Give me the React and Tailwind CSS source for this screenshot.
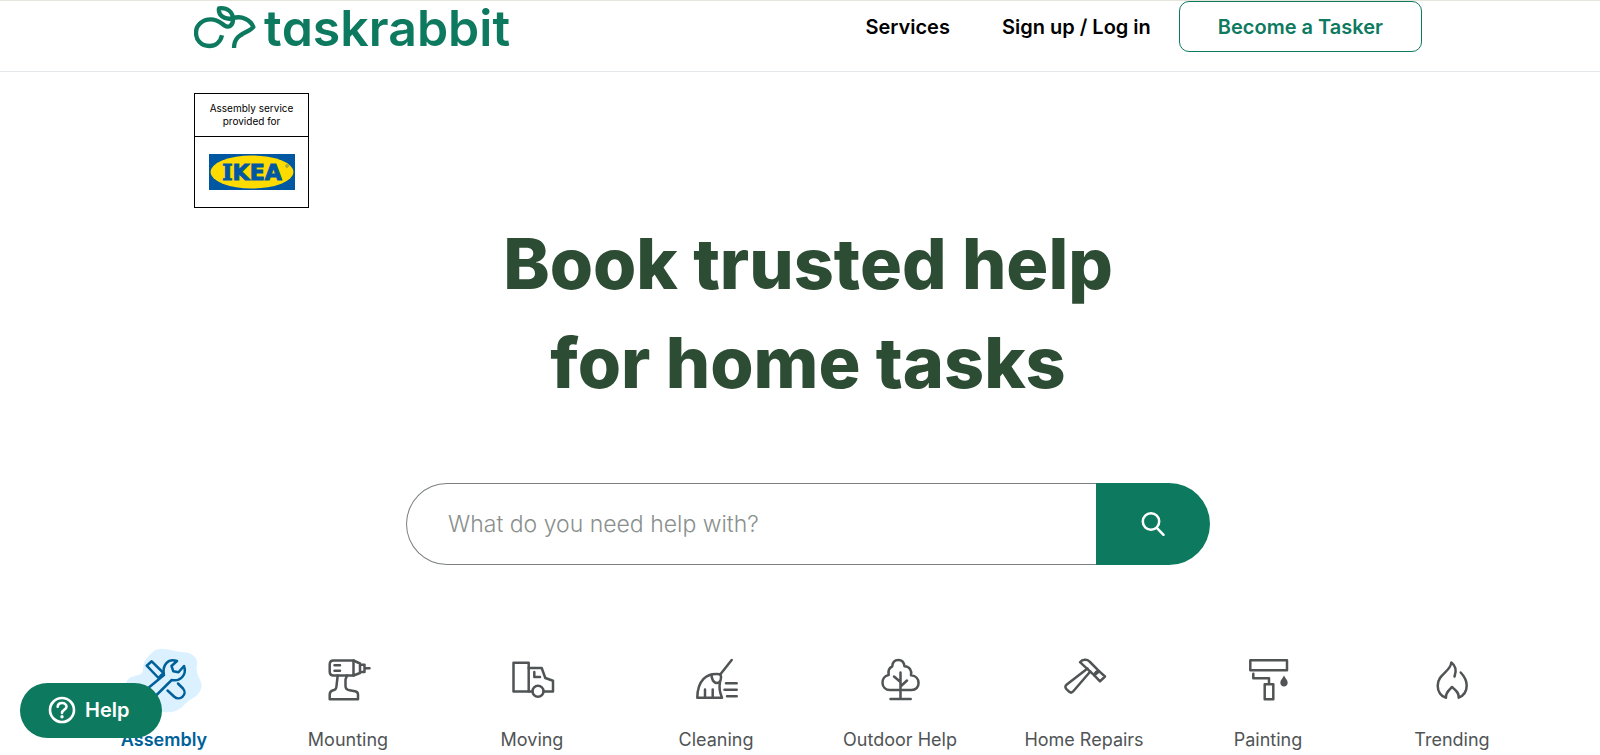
import { clsx } from 'clsx';

function RabbitMark() {
  return (
    <svg
      viewBox="42 14 186 132"
      className="h-11 w-[62px] shrink-0"
      fill="none"
      stroke="currentColor"
      strokeWidth="13"
      strokeLinejoin="round"
      aria-hidden="true"
    >
      <path d="M126 105C121 126 106 137 88 137C63 137 48 119 48 97C48 74 68 57 92 57C114 57 122 68 134 76C147 84 159 74 159 58C159 34 142 21 117 24C114 44 132 60 158 54C186 44 213 60 220 80C206 99 162 98 162 143" />
    </svg>
  );
}

function AssemblyIcon() {
  return (
    <>
      <path
        d="M-14 27C-12 20-4 20 1 18C5 15 1 8 7 2C12-4 16-8 24-7C31-7 35-4 42-4C50-4 56 0 57 5C58 9 55 12 58 19C60 25 63 28 61 33C58 42 50 42 44 49C38 56 30 57 22 56C10 55 0 52-6 44C-12 38-16 33-14 27Z"
        fill="#dbf1ff"
        stroke="none"
      />
      <path d="M6.7 9.7L11.7 5.3L23.5 17L18.5 22Z" />
      <path d="M24 19C22 9 28 2 37 5L31.5 10L33.3 15.3L38.5 16.3L44 10C47 18 41 26 31.7 24L12 43.5C7 48-1 41 4 35.5Z" />
      <path d="M27.5 34.5L34 40.5C40 46 48 38 43 32.5L38 27.5" />
    </>
  );
}

function DrillIcon() {
  return (
    <>
      <path d="M29.5 4.5H9.5C7 4.5 5.7 6 5.7 8.5V15.5C5.7 18 7 19.5 9.5 19.5H29.5Z" />
      <path d="M29.5 4.5L36 7.5V17L29.5 19.5M36 8.7H40.5V16H36M40.5 12.3H45.5" />
      <path d="M10.5 9.2H16M10.5 14.7H16" />
      <path d="M13.7 19.5L12.5 30C12.3 33 11.5 33.6 8.5 34.5C6.5 35.2 5.7 36.5 5.7 38.5V43.3H34V38.5C34 36.5 33 35.5 31 35.2L25.5 34.3C22.5 33.8 21.5 32.5 21.5 30V23.5L23 19.5" />
    </>
  );
}

function TruckIcon() {
  return (
    <>
      <path d="M5.5 6.7H20.7V35.5H5.5Z" />
      <path d="M20.7 12H33.7L37.3 22L45 24.7V35.5H35.5M20.7 35.5H24.5" />
      <circle cx="30" cy="35.3" r="5.5" />
      <path d="M26.3 16V21H32" />
    </>
  );
}

function BroomIcon() {
  return (
    <>
      <path d="M39.7 4L28.2 18.5" />
      <path d="M28.5 18.3C14 16 5.5 25 5.3 41.7H30C27.5 36 27 31 28 26" />
      <path d="M19.5 18.8C19.5 23 21.5 27 25 27C28.5 27 30 22 28.5 18.5" />
      <path d="M13 33.5V41.7M20.7 33.5V41.7" />
      <path d="M34 27.3H44.7M32.5 33.7H44.7M35 40.3H44.7" />
    </>
  );
}

function TreeIcon() {
  return (
    <>
      <path d="M14 34C4.5 34 4 20.5 12.7 19C12 15 12.8 12 16.2 10.5C16.5 6 19 4 22.3 4C25.6 4 28 6 28.5 10.3C33.5 10.5 36 14.5 35 19.2C45 20 45 34 35.5 34Z" />
      <path d="M24.5 16.5V43M14.5 43H34.7M18 20.5L24.5 26M31 24.5L24.5 30.5" />
    </>
  );
}

function HammerIcon() {
  return (
    <>
      <path d="M27.5 12.5L6.8 28.5C5 30 5 31.5 6.2 32.8L9.3 35.8C10.7 37 12 36.8 13.3 35.3L30.3 15.5" />
      <path d="M20 6.2C22.5 3.3 27 2.8 29.5 5.5L39.3 15.3L34.3 19.3Z" />
      <path d="M39.3 15.3L45 20.5L40 25.3L34.3 19.3C35 16.5 37 15 39.3 15.3Z" />
    </>
  );
}

function RollerIcon() {
  return (
    <>
      <path d="M6.3 4.2H43V14.2H6.3Z" />
      <path d="M9.3 17.8V22.2H25V28.3M20.7 28.3H29.3V43.3H20.7Z" />
      <path
        d="M40 19.5C41.3 22.5 43.7 24 43.7 26.7C43.7 29 42 30.5 40 30.5C38 30.5 36.3 29 36.3 26.7C36.3 24 38.7 22.5 40 19.5Z"
        fill="currentColor"
        stroke="none"
      />
    </>
  );
}

function FlameIcon() {
  return (
    <path d="M26.5 20.5C28.5 15 27.5 9.5 23.3 6.5C22.5 16 9.7 18 9.7 29.7C9.7 35.5 13 40.5 18 41.7C17.5 37 20.5 34.5 24 31C27.5 34 31.5 37 30.7 41.7C36 39.5 38.7 35 38.7 29.5C38.7 24 36.5 20.5 32.7 16.5" />
  );
}

const categories = [
  { label: 'Assembly', icon: AssemblyIcon, active: true },
  { label: 'Mounting', icon: DrillIcon },
  { label: 'Moving', icon: TruckIcon },
  { label: 'Cleaning', icon: BroomIcon },
  { label: 'Outdoor Help', icon: TreeIcon },
  { label: 'Home Repairs', icon: HammerIcon },
  { label: 'Painting', icon: RollerIcon },
  { label: 'Trending', icon: FlameIcon },
];

function CategoryTab({ label, icon: Icon, active }) {
  return (
    <button
      type="button"
      className={clsx(
        'flex flex-1 flex-col items-center gap-[22px] text-lg whitespace-nowrap',
        active ? 'font-semibold text-[#00619a]' : 'text-[#505455]'
      )}
    >
      <svg
        viewBox="0 0 48 48"
        className="h-12 w-12 overflow-visible"
        fill="none"
        stroke="currentColor"
        strokeWidth="2.5"
        strokeLinecap="round"
        strokeLinejoin="round"
        aria-hidden="true"
      >
        <Icon />
      </svg>
      {label}
    </button>
  );
}

function IkeaBadge() {
  return (
    <div className="w-[115px] border border-black text-center">
      <p className="border-b border-black py-2 text-[10px] leading-[13px] text-black">
        Assembly service
        <br />
        provided for
      </p>
      <div className="flex h-[70px] items-center justify-center">
        <svg viewBox="0 0 86 36" className="h-9 w-[86px]" role="img" aria-label="IKEA">
          <rect width="86" height="36" fill="#0058a3" />
          <ellipse cx="43" cy="18" rx="41.5" ry="16.5" fill="#ffdb00" />
          <text
            x="43"
            y="26"
            textAnchor="middle"
            fontFamily="'DejaVu Sans', sans-serif"
            fontWeight="700"
            fontSize="22"
            fill="#0058a3"
            stroke="#0058a3"
            strokeWidth="1"
          >
            <tspan fontFamily="'DejaVu Serif', serif">I</tspan>KEA
          </text>
          <circle cx="78" cy="12" r="1.3" fill="none" stroke="#0058a3" strokeWidth="0.5" />
        </svg>
      </div>
    </div>
  );
}

function Header() {
  return (
    <header className="border-t border-b border-t-[#e6e5dc] border-b-[#e4e8eb] pb-[19px] pl-4">
      <div className="mx-auto flex max-w-[1228px] items-center justify-between">
        <a href="#" className="flex h-[51px] items-center gap-2 text-[#0d7a5f]">
          <RabbitMark />
          <span className="pt-1 text-[50px] leading-[51px] font-semibold">
            t<span className="[font-feature-settings:'cv11']">a</span>skrabbit
          </span>
        </a>
        <nav className="flex items-center text-xl font-semibold text-black">
          <a href="#">Services</a>
          <a href="#" className="ml-[52px]">
            Sign up / Log in
          </a>
          <a
            href="#"
            className="ml-7 flex h-[51px] items-center rounded-[10px] border border-[#0d7a5f] px-[38px] text-[#0d7a5f]"
          >
            Become a Tasker
          </a>
        </nav>
      </div>
    </header>
  );
}

function SearchBar() {
  return (
    <form className="mx-auto flex h-[82px] w-full max-w-[804px]" onSubmit={(e) => e.preventDefault()}>
      <input
        type="text"
        aria-label="What do you need help with?"
        placeholder="What do you need help with?"
        className="min-w-0 flex-1 rounded-l-full border border-r-0 border-[#7d8080] pl-[41px] text-[23px] font-light text-[#333] placeholder:text-[#8a908d]"
      />
      <button
        type="submit"
        aria-label="Search"
        className="flex w-[114px] items-center justify-center rounded-r-full bg-[#0d7a5f] text-white"
      >
        <svg
          viewBox="0 0 24 24"
          className="h-6 w-6"
          fill="none"
          stroke="currentColor"
          strokeWidth="2.5"
          strokeLinecap="round"
          aria-hidden="true"
        >
          <circle cx="10" cy="9.5" r="8.2" />
          <path d="M15.8 15.8L22.5 22.8" />
        </svg>
      </button>
    </form>
  );
}

function HelpButton() {
  return (
    <button
      type="button"
      className="fixed bottom-[17px] left-5 flex h-[55px] w-[142px] items-center gap-[9px] rounded-full bg-[#0d7a5f] pb-[2px] pl-7 text-xl font-semibold text-white"
    >
      <svg
        viewBox="0 0 28 28"
        className="h-7 w-7"
        fill="none"
        stroke="currentColor"
        strokeWidth="2.6"
        strokeLinecap="round"
        strokeLinejoin="round"
        aria-hidden="true"
      >
        <circle cx="14" cy="14" r="12" />
        <path d="M9.7 10.8C10 5.5 18.5 5.8 18.5 10.8C18.5 13.8 14 13.5 14 17" />
        <circle cx="14" cy="20.8" r="1.7" fill="currentColor" stroke="none" />
      </svg>
      Help
    </button>
  );
}

export default function App() {
  return (
    <div className="bg-white font-[Inter,sans-serif]">
      <Header />
      <main className="pl-4">
        <div className="mx-auto max-w-[1228px] pt-[21px]">
          <IkeaBadge />
          <h1 className="mt-[6px] text-center text-[70px] leading-[99px] font-extrabold text-[#2c4c33]">
            Book trusted help
            <br />
            for home tasks
          </h1>
        </div>
        <div className="mt-[71px]">
          <SearchBar />
        </div>
        <div className="mx-auto mt-[91px] flex max-w-[1472px]">
          {categories.map((category) => (
            <CategoryTab key={category.label} {...category} />
          ))}
        </div>
      </main>
      <HelpButton />
    </div>
  );
}
